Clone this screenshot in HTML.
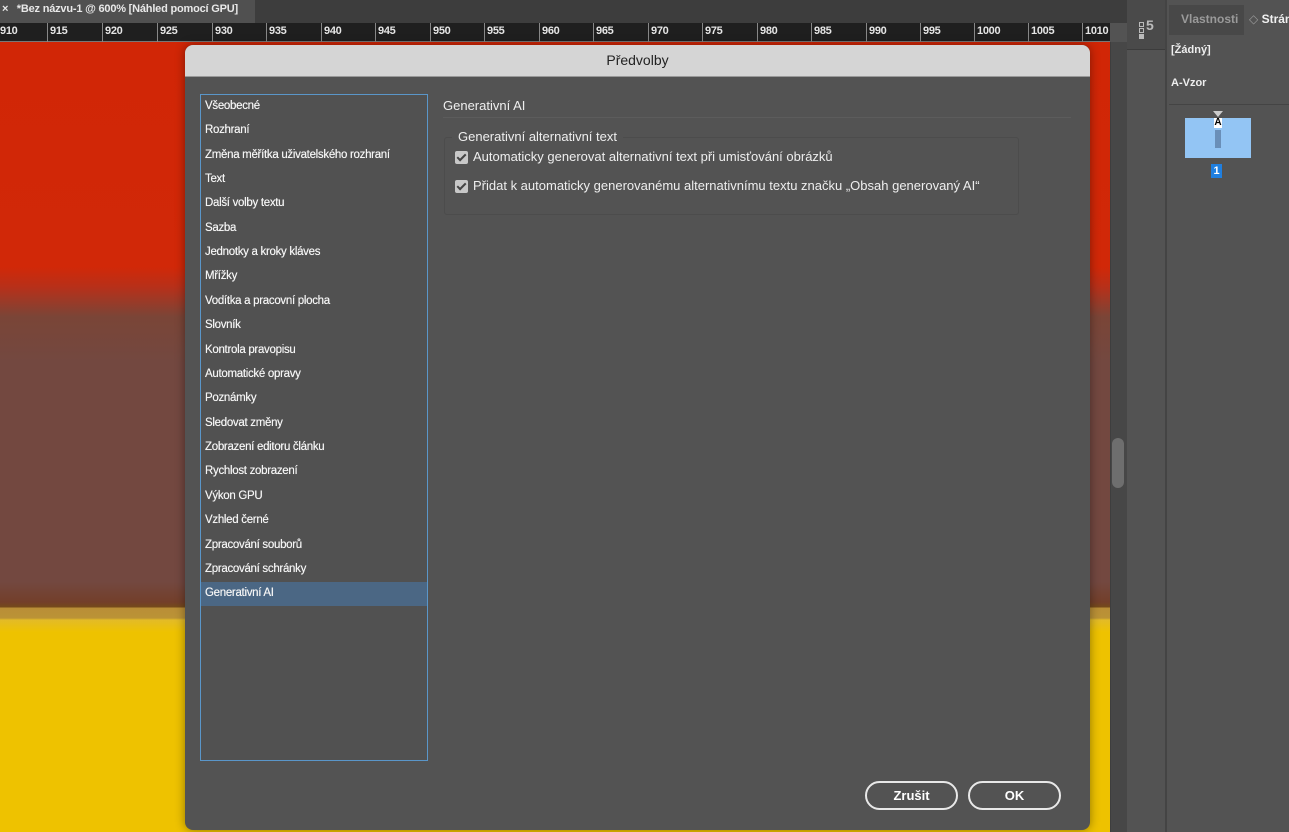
<!DOCTYPE html>
<html><head><meta charset="utf-8"><style>
*{margin:0;padding:0;box-sizing:border-box}
body{width:1289px;height:832px;overflow:hidden;background:#535353;font-family:"Liberation Sans",sans-serif;position:relative;color:#eee}
.abs{position:absolute}
#top{left:0;top:0;width:1127px;height:23px;background:#3d3d3d}
#tab{left:0;top:0;width:255px;height:23px;background:#505050;font-size:11px;font-weight:bold;color:#e8e8e8;padding:3px 0 0 2px;letter-spacing:-0.2px}
#ruler{left:0;top:23px;width:1110px;height:19px;background:#1f1f1f;border-bottom:1px solid #777}
.rn{position:absolute;top:2px;font-size:11px;font-weight:bold;color:#e5e5e5;letter-spacing:-0.3px}
.rt{position:absolute;top:0;width:1px;height:19px;background:#888}
#canvas{left:0;top:42px;width:1110px;height:790px;background:linear-gradient(to bottom,#d12606 0px,#d12808 225px,#b73019 245px,#7a4537 275px,#734840 320px,#734840 540px,#733f2a 560px,#754a1a 565px,#b98e37 566px,#bb9336 576px,#e3bb27 578px,#eec200 590px,#eec200 790px)}
#vs{left:1110px;top:42px;width:17px;height:790px;background:#474747;border-left:1px solid #3e3e3e}
#thumb{left:1112px;top:438px;width:12px;height:50px;background:#6e6e6e;border-radius:6px}
#tools{left:1127px;top:0;width:40px;height:832px;background:#535353;border-right:2px solid #444}
#dlg{left:185px;top:45px;width:905px;height:785px;background:#535353;border-radius:8px;overflow:hidden;box-shadow:0 0 10px rgba(0,0,0,.4)}
#title{height:32px;background:#d5d5d5;color:#222;text-align:center;font-size:14px;padding-top:7px;border-bottom:1px solid #999}
#list{left:15px;top:49px;width:228px;height:667px;border:1px solid #5a96c9;background:#515151}
.it{position:absolute;left:4px;font-size:11.5px;color:#f4f4f4;letter-spacing:-0.3px;height:24px;line-height:22px;text-shadow:0 0 0.4px #fff}
.sel{left:0;width:226px;padding-left:4px;background:#4b6784}
.cb{position:absolute;width:13px;height:13px;background:#c8c8c8;border-radius:2px}
.cb:after{content:"";position:absolute;left:4px;top:1px;width:3px;height:7px;border:solid #444;border-width:0 2px 2px 0;transform:rotate(45deg)}
.btn{position:absolute;top:736px;height:29px;border:2px solid #e8e8e8;border-radius:15px;color:#fff;font-size:13px;font-weight:bold;text-align:center;line-height:25px}
</style></head><body>
<div class="abs" id="top"></div>
<div class="abs" id="tab">×&nbsp;&nbsp; *Bez názvu-1 @ 600% [Náhled pomocí GPU]</div>
<div class="abs" id="ruler">
<span class="rn" style="left:0">910</span>
<div class="rt" style="left:47px"></div><span class="rn" style="left:50px">915</span>
<div class="rt" style="left:102px"></div><span class="rn" style="left:105px">920</span>
<div class="rt" style="left:157px"></div><span class="rn" style="left:160px">925</span>
<div class="rt" style="left:212px"></div><span class="rn" style="left:215px">930</span>
<div class="rt" style="left:266px"></div><span class="rn" style="left:269px">935</span>
<div class="rt" style="left:321px"></div><span class="rn" style="left:324px">940</span>
<div class="rt" style="left:375px"></div><span class="rn" style="left:378px">945</span>
<div class="rt" style="left:430px"></div><span class="rn" style="left:433px">950</span>
<div class="rt" style="left:484px"></div><span class="rn" style="left:487px">955</span>
<div class="rt" style="left:539px"></div><span class="rn" style="left:542px">960</span>
<div class="rt" style="left:593px"></div><span class="rn" style="left:596px">965</span>
<div class="rt" style="left:648px"></div><span class="rn" style="left:651px">970</span>
<div class="rt" style="left:702px"></div><span class="rn" style="left:705px">975</span>
<div class="rt" style="left:757px"></div><span class="rn" style="left:760px">980</span>
<div class="rt" style="left:811px"></div><span class="rn" style="left:814px">985</span>
<div class="rt" style="left:866px"></div><span class="rn" style="left:869px">990</span>
<div class="rt" style="left:920px"></div><span class="rn" style="left:923px">995</span>
<div class="rt" style="left:974px"></div><span class="rn" style="left:977px">1000</span>
<div class="rt" style="left:1028px"></div><span class="rn" style="left:1031px">1005</span>
<div class="rt" style="left:1082px"></div><span class="rn" style="left:1085px">1010</span>
</div>
<div class="abs" id="canvas"></div>
<div class="abs" id="vs"></div>
<div class="abs" id="thumb"></div>
<div class="abs" id="tools">
<div class="abs" style="left:0;top:0;width:38px;height:50px;background:#4a4a4a;border-bottom:1px solid #3c3c3c"></div>
<div class="abs" style="left:12px;top:22px;width:5px;height:5px;border:1px solid #bbb"></div>
<div class="abs" style="left:12px;top:28px;width:5px;height:5px;border:1px solid #bbb"></div>
<div class="abs" style="left:12px;top:34px;width:5px;height:5px;background:#bbb"></div>
<div class="abs" style="left:19px;top:17px;font-size:14px;color:#bbb;font-weight:bold">5</div>
</div>
<div class="abs" style="left:1169px;top:0;width:120px;height:40px;background:#535353"></div>
<div class="abs" style="left:1169px;top:5px;width:75px;height:30px;background:#484848"></div>
<div class="abs" style="left:1181px;top:12px;font-size:12px;font-weight:bold;color:#9a9a9a">Vlastnosti</div>
<div class="abs" style="left:1249px;top:12px;font-size:12px;font-weight:bold;color:#f0f0f0;white-space:nowrap"><span style="color:#999;font-weight:normal">◇</span> Strán</div>
<div class="abs" style="left:1171px;top:44px;font-size:11px;font-weight:bold;color:#eee">[Žádný]</div>
<div class="abs" style="left:1171px;top:77px;font-size:11px;font-weight:bold;color:#eee">A-Vzor</div>
<div class="abs" style="left:1169px;top:104px;width:120px;height:1px;background:#444"></div>
<div class="abs" style="left:1213px;top:111px;width:0;height:0;border-left:5px solid transparent;border-right:5px solid transparent;border-top:6px solid #ccc"></div>
<div class="abs" style="left:1185px;top:118px;width:66px;height:40px;background:#93c5f4"></div>
<div class="abs" style="left:1214px;top:118px;width:8px;height:10px;background:#fff;font-size:10px;font-weight:bold;color:#000;text-align:center;line-height:10px">A</div>
<div class="abs" style="left:1215px;top:130px;width:6px;height:18px;background:#6a8fb8"></div>
<div class="abs" style="left:1211px;top:164px;width:11px;height:14px;background:#1f7fe0;color:#fff;font-size:11px;font-weight:bold;text-align:center;line-height:14px">1</div>

<div class="abs" id="dlg">
<div id="title">Předvolby</div>
<div class="abs" id="list">
<div class="it" style="top:0">Všeobecné</div>
<div class="it" style="top:24px">Rozhraní</div>
<div class="it" style="top:49px">Změna měřítka uživatelského rozhraní</div>
<div class="it" style="top:73px">Text</div>
<div class="it" style="top:97px">Další volby textu</div>
<div class="it" style="top:122px">Sazba</div>
<div class="it" style="top:146px">Jednotky a kroky kláves</div>
<div class="it" style="top:170px">Mřížky</div>
<div class="it" style="top:195px">Vodítka a pracovní plocha</div>
<div class="it" style="top:219px">Slovník</div>
<div class="it" style="top:244px">Kontrola pravopisu</div>
<div class="it" style="top:268px">Automatické opravy</div>
<div class="it" style="top:292px">Poznámky</div>
<div class="it" style="top:317px">Sledovat změny</div>
<div class="it" style="top:341px">Zobrazení editoru článku</div>
<div class="it" style="top:365px">Rychlost zobrazení</div>
<div class="it" style="top:390px">Výkon GPU</div>
<div class="it" style="top:414px">Vzhled černé</div>
<div class="it" style="top:439px">Zpracování souborů</div>
<div class="it" style="top:463px">Zpracování schránky</div>
<div class="it sel" style="top:487px">Generativní AI</div>
</div>
<div class="abs" style="left:258px;top:53px;font-size:13px;color:#eee">Generativní AI</div>
<div class="abs" style="left:258px;top:72px;width:628px;height:1px;background:#5c5c5c"></div>
<div class="abs" style="left:259px;top:92px;width:575px;height:78px;border:1px solid #4c4c4c;border-radius:3px"></div>
<div class="abs" style="left:267px;top:84px;font-size:13px;color:#eee;background:#535353;padding:0 6px">Generativní alternativní text</div>
<div class="cb" style="left:270px;top:106px"></div>
<div class="abs" style="left:288px;top:104px;font-size:13px;color:#eee">Automaticky generovat alternativní text při umisťování obrázků</div>
<div class="cb" style="left:270px;top:135px"></div>
<div class="abs" style="left:288px;top:133px;font-size:13px;color:#eee">Přidat k automaticky generovanému alternativnímu textu značku „Obsah generovaný AI“</div>
<div class="btn" style="left:680px;width:93px">Zrušit</div>
<div class="btn" style="left:783px;width:93px">OK</div>
</div>
</body></html>
